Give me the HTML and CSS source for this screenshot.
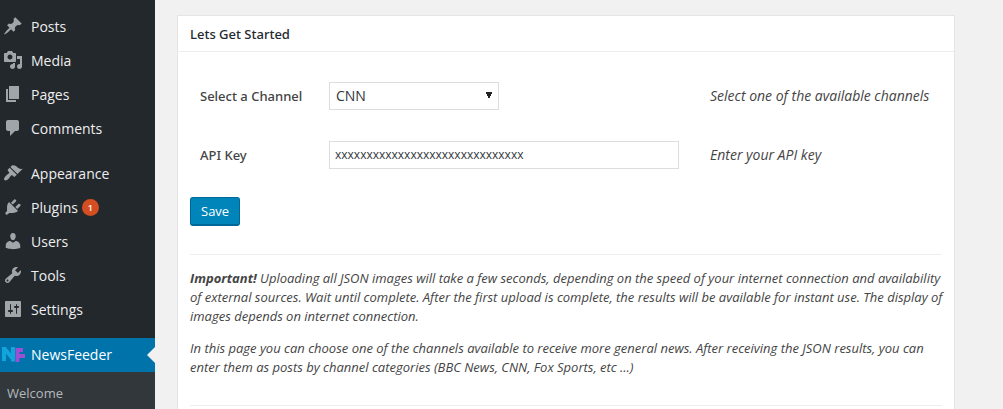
FILE: index.html
```html
<!DOCTYPE html>
<html lang="en">
<head>
<meta charset="utf-8">
<title>NewsFeeder</title>
<link rel="stylesheet" href="styles.css">
</head>
<body>
<div class="layout">
  <nav class="sidebar" aria-label="Main menu">
    <ul class="menu">
      <li><a class="menu-link" href="#"><svg class="icon" viewBox="0 0 20 20" aria-hidden="true"><path d="M10.44 3.02l1.82-1.82 6.36 6.35-1.83 1.82c-1.05-.68-2.48-.57-3.41.36l-.75.75c-.92.93-1.04 2.35-.35 3.41l-1.83 1.82-2.41-2.41-2.8 2.79c-.42.42-3.38 2.71-3.8 2.29s1.86-3.39 2.28-3.81l2.79-2.79L4.1 9.36l1.83-1.82c1.05.69 2.48.57 3.4-.36l.75-.75c.93-.92 1.05-2.35.36-3.41z"/></svg>Posts</a></li>
      <li><a class="menu-link" href="#"><svg class="icon" viewBox="0 0 20 20" aria-hidden="true"><path d="M13 11V4c0-.55-.45-1-1-1h-1.67L9 1H5L3.67 3H2c-.55 0-1 .45-1 1v7c0 .55.45 1 1 1h10c.55 0 1-.45 1-1zM7 4.5c1.38 0 2.5 1.12 2.5 2.5S8.38 9.5 7 9.5 4.5 8.38 4.5 7 5.62 4.5 7 4.5zM14 6h5v10.5c0 1.38-1.12 2.5-2.5 2.5S14 17.88 14 16.5s1.12-2.5 2.5-2.5c.17 0 .34.02.5.05V9h-3V6zm-4 8.05V13h2v3.5c0 1.38-1.12 2.5-2.5 2.5S7 17.88 7 16.5 8.12 14 9.5 14c.17 0 .34.02.5.05z"/></svg>Media</a></li>
      <li><a class="menu-link" href="#"><svg class="icon" viewBox="0 0 20 20" aria-hidden="true"><path d="M6 15V2h10v13H6zm-1 1h8v2H3V5h2v11z"/></svg>Pages</a></li>
      <li><a class="menu-link" href="#"><svg class="icon" viewBox="0 0 20 20" aria-hidden="true"><path d="M5 2h9c1.100 0 2 .9 2 2v7c0 1.100-.9 2-2 2h-2l-5 5v-5H5c-1.100 0-2-.9-2-2V4c0-1.100.9-2 2-2z"/></svg>Comments</a></li>
    </ul>
    <ul class="menu">
      <li><a class="menu-link" href="#"><svg class="icon" viewBox="0 0 20 20" aria-hidden="true"><path d="M14.48 11.06L7.41 3.99l1.5-1.5c.5-.56 2.3-.47 3.51.32 1.21.8 1.43 1.28 2.91 2.1 1.18.64 2.45 1.26 4.45.85zm-.71.71L6.7 4.7 4.93 6.47c-.39.39-.39 1.02 0 1.41l1.06 1.06c.39.39.39 1.03 0 1.42-.6.6-1.43 1.11-2.21 1.69-.35.26-.7.53-1.01.84C1.43 14.23.4 16.08 1.4 17.07c.99 1 2.84-.03 4.18-1.36.31-.31.58-.66.85-1.02.57-.78 1.08-1.61 1.69-2.21.39-.39 1.02-.39 1.41 0l1.06 1.06c.39.39 1.02.39 1.41 0z"/></svg>Appearance</a></li>
      <li><a class="menu-link" href="#"><svg class="icon" viewBox="0 0 20 20" aria-hidden="true"><path d="M13.11 4.36L9.87 7.6 8 5.73l3.24-3.24c.35-.34 1.05-.2 1.56.32.52.51.66 1.21.31 1.55zm-8 1.77l.91-1.12 9.01 9.01-1.19.84c-.71.71-2.63 1.16-3.82 1.16H6.14L4.9 17.26c-.59.59-1.54.59-2.12 0-.59-.58-.59-1.53 0-2.12l1.24-1.24v-3.88c0-1.13.4-3.19 1.09-3.89zm7.26 3.97l3.24-3.24c.34-.35 1.04-.21 1.55.31.52.51.66 1.21.31 1.55l-3.24 3.25z"/></svg>Plugins<span class="badge">1</span></a></li>
      <li><a class="menu-link" href="#"><svg class="icon" viewBox="0 0 20 20" aria-hidden="true"><path d="M10 9.25c-2.27 0-2.73-3.44-2.73-3.44C7 4.02 7.82 2 9.97 2c2.16 0 2.98 2.02 2.71 3.81 0 0-.41 3.44-2.68 3.44zm0 2.57L12.72 10c2.39 0 4.52 2.33 4.52 4.53v2.49s-3.65 1.13-7.24 1.13c-3.65 0-7.24-1.13-7.24-1.13v-2.49c0-2.25 1.94-4.48 4.47-4.48z"/></svg>Users</a></li>
      <li><a class="menu-link" href="#"><svg class="icon" viewBox="0 0 20 20" aria-hidden="true"><path d="M16.68 9.77c-1.34 1.34-3.3 1.67-4.95.99l-5.41 6.52c-.99.99-2.59.99-3.58 0s-.99-2.59 0-3.57l6.52-5.42c-.68-1.65-.35-3.61.99-4.95 1.28-1.28 3.12-1.62 4.72-1.06l-2.89 2.89 2.82 2.82 2.86-2.87c.53 1.58.18 3.39-1.08 4.65zM3.81 16.21c.4.39 1.04.39 1.43 0 .4-.4.4-1.04 0-1.43-.39-.4-1.03-.4-1.43 0-.39.39-.39 1.03 0 1.43z"/></svg>Tools</a></li>
      <li><a class="menu-link" href="#"><svg class="icon" viewBox="0 0 20 20" aria-hidden="true"><path d="M18 17V3c0-.6-.4-1-1-1H3c-.6 0-1 .4-1 1v14c0 .6.4 1 1 1h14c.6 0 1-.4 1-1zM8 11h1c.55 0 1 .45 1 1s-.45 1-1 1H8v1.5c0 .28-.22.5-.5.5s-.5-.22-.5-.5V13H6c-.55 0-1-.45-1-1s.45-1 1-1h1V5.5c0-.28.22-.5.5-.5s.5.22.5.5V11zm5-2h-1c-.55 0-1-.45-1-1s.45-1 1-1h1V5.5c0-.28.22-.5.5-.5s.5.22.5.5V7h1c.55 0 1 .45 1 1s-.45 1-1 1h-1v5.5c0 .28-.22.5-.5.5s-.5-.22-.5-.5V9z"/></svg>Settings</a></li>
    </ul>
    <ul class="menu">
      <li>
        <a class="menu-link current" href="#"><svg class="logo" viewBox="0 0 24 16" aria-hidden="true"><g fill="none" stroke-width="4"><path stroke="#10a5dc" d="M3 15V1M12 15.500V1M3 2L12 13"/><path stroke="#9b4fd3" d="M16.500 16V2M14.500 4H22M14.500 10H24"/></g></svg>NewsFeeder</a>
        <ul class="submenu"><li><a href="#">Welcome</a></li></ul>
      </li>
    </ul>
  </nav>
  <main class="content">
    <section class="card">
      <h2 class="card-title">Lets Get Started</h2>
      <form class="card-body">
        <table class="form-table">
          <tr>
            <th scope="row"><label for="channel">Select a Channel</label></th>
            <td class="field"><select class="control channel" id="channel"><option>CNN</option></select></td>
            <td class="hint">Select one of the available channels</td>
          </tr>
          <tr>
            <th scope="row"><label for="key">API Key</label></th>
            <td class="field"><input class="control key" id="key" type="text" value="xxxxxxxxxxxxxxxxxxxxxxxxxxxxxx"></td>
            <td class="hint">Enter your API key</td>
          </tr>
        </table>
        <button class="save" type="button">Save</button>
        <hr>
        <div class="notes">
          <p><strong>Important!</strong> Uploading all JSON images will take a few seconds, depending on the speed of your internet connection and availability of external sources. Wait until complete. After the first upload is complete, the results will be available for instant use. The display of images depends on internet connection.</p>
          <p>In this page you can choose one of the channels available to receive more general news. After receiving the JSON results, you can enter them as posts by channel categories (BBC News, CNN, Fox Sports, etc ...)</p>
        </div>
        <hr>
      </form>
    </section>
  </main>
</div>
</body>
</html>
```
FILE: styles.css
```css
* { box-sizing: border-box; }
body {
  margin: 0;
  background: #f1f1f1;
  color: #444;
  font: 13px/19px "Open Sans", "Noto Sans", sans-serif;
  overflow: hidden;
}
.layout { display: flex; height: 100vh; }
.sidebar {
  flex: 0 0 155px;
  display: flex;
  flex-direction: column;
  gap: 11px;
  padding-top: 10px;
  background: #23282d;
}
ul { margin: 0; padding: 0; list-style: none; }
.menu:last-child { flex: 1; background: #32373c; }
.menu-link {
  position: relative;
  display: flex;
  align-items: center;
  height: 34px;
  padding-bottom: 2px;
  color: #eee;
  font-size: 14px;
  text-decoration: none;
}
.icon {
  width: 20px;
  height: 20px;
  margin: 0 8px 0 3px;
  fill: #a0a5aa;
}
.logo { width: 24px; height: 16px; margin: 0 6px 0 1px; }
.badge {
  width: 17px;
  height: 17px;
  margin-left: 4px;
  border-radius: 50%;
  background: #d54e21;
  color: #fff;
  font-size: 9px;
  font-weight: 600;
  line-height: 17px;
  text-align: center;
}
.current { background: #0073aa; color: #fff; }
.current::after {
  content: "";
  position: absolute;
  top: 9px;
  right: 0;
  border: 8px solid transparent;
  border-left-width: 0;
  border-right-color: #f1f1f1;
}
.submenu { padding: 12px 7px; }
.submenu a { color: #b4b9be; text-decoration: none; }
.content { flex: 1; min-width: 0; padding: 15px 48px 0 22px; }
.card { background: #fff; border: 1px solid #e5e5e5; }
.card-title {
  margin: 0;
  padding: 9px 12px 7px;
  border-bottom: 1px solid #eee;
  color: #23282d;
  font-family: "Noto Sans", "Open Sans", sans-serif;
  font-size: 13px;
  font-weight: 500;
}
.card-body { padding: 14px 12px; }
.form-table { width: 100%; border-collapse: collapse; }
.form-table tr { height: 59px; }
.form-table th {
  width: 129px;
  padding: 2px 10px 0;
  font-family: "Noto Sans", "Open Sans", sans-serif;
  font-weight: 500;
  text-align: left;
  white-space: nowrap;
}
.form-table td { padding: 0 10px; }
.form-table .field { width: 381px; }
.hint { font-size: 14px; font-style: italic; white-space: nowrap; }
.control {
  display: block;
  height: 28px;
  border: 1px solid #ddd;
  background-color: #fff;
  color: #32373c;
  font: inherit;
}
.channel {
  width: 170px;
  padding: 0 6px;
  appearance: none;
  font-size: 14px;
  background-image: conic-gradient(from -27deg at 50% 100%, #222 54deg, transparent 0);
  background-size: 8px 7px;
  background-position: right 5px center;
  background-repeat: no-repeat;
}
.key { width: 350px; padding: 0 5px; font-size: 12px; }
.save {
  display: block;
  height: 29px;
  margin: 13px 0 28px;
  padding: 0 10px;
  border: 1px solid #006799;
  border-bottom-width: 2px;
  border-radius: 3px;
  background: #0085ba;
  color: #fff;
  font: inherit;
}
hr { margin: 0; border: 0; border-top: 1px solid #eee; }
.notes { margin-right: -6px; padding: 14px 0 28px; font-style: italic; }
.notes p { margin: 0; }
.notes p + p { margin-top: 13px; }
```
